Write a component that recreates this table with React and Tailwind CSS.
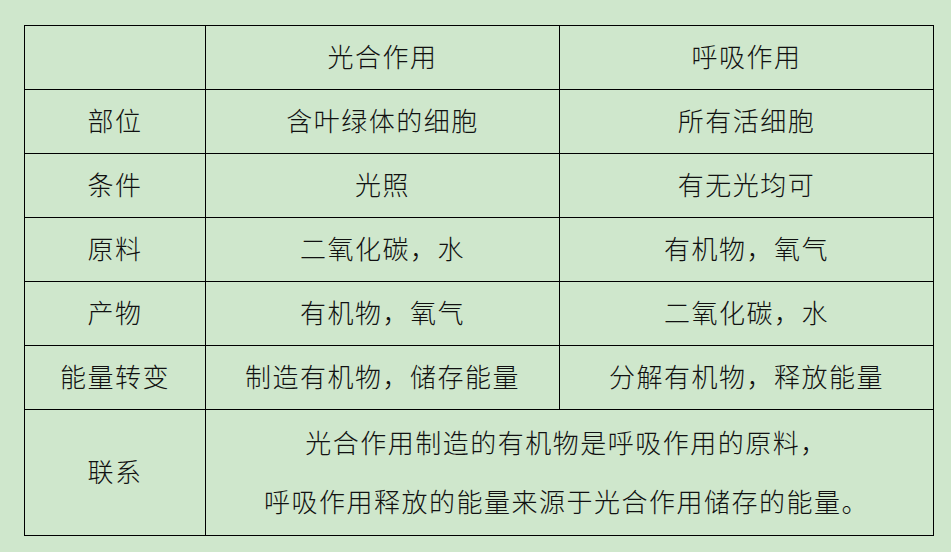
import React from 'react';

const rows = [
  ['部位', '含叶绿体的细胞', '所有活细胞'],
  ['条件', '光照', '有无光均可'],
  ['原料', '二氧化碳，水', '有机物，氧气'],
  ['产物', '有机物，氧气', '二氧化碳，水'],
  ['能量转变', '制造有机物，储存能量', '分解有机物，释放能量'],
];

const cell = 'border border-black text-center align-middle p-0 pb-[4px]';

export default function App() {
  return (
    <div
      className="w-[951px] h-[552px] bg-[#cfe7cc] pt-[25px] pl-[24px] text-[#111] text-[26px] tracking-[1.5px]"
      style={{ fontFamily: '"Noto Sans CJK SC", "Noto Sans", sans-serif' }}
    >
      <table className="border-collapse table-fixed w-[909px] font-light">
        <colgroup>
          <col className="w-[181px]" />
          <col className="w-[354px]" />
          <col className="w-[374px]" />
        </colgroup>
        <tbody>
          <tr className="h-[64px]">
            <td className={cell}></td>
            <td className={cell}>光合作用</td>
            <td className={cell}>呼吸作用</td>
          </tr>
          {rows.map((r, i) => (
            <tr key={i} className="h-[64px]">
              <td className={cell}>{r[0]}</td>
              <td className={cell}>{r[1]}</td>
              <td className={cell}>{r[2]}</td>
            </tr>
          ))}
          <tr className="h-[126px]">
            <td className={cell}>联系</td>
            <td className={`${cell} leading-[59px] pr-[6px]`} colSpan={2}>
              <div>光合作用制造的有机物是呼吸作用的原料，</div>
              <div>呼吸作用释放的能量来源于光合作用储存的能量。</div>
            </td>
          </tr>
        </tbody>
      </table>
    </div>
  );
}
